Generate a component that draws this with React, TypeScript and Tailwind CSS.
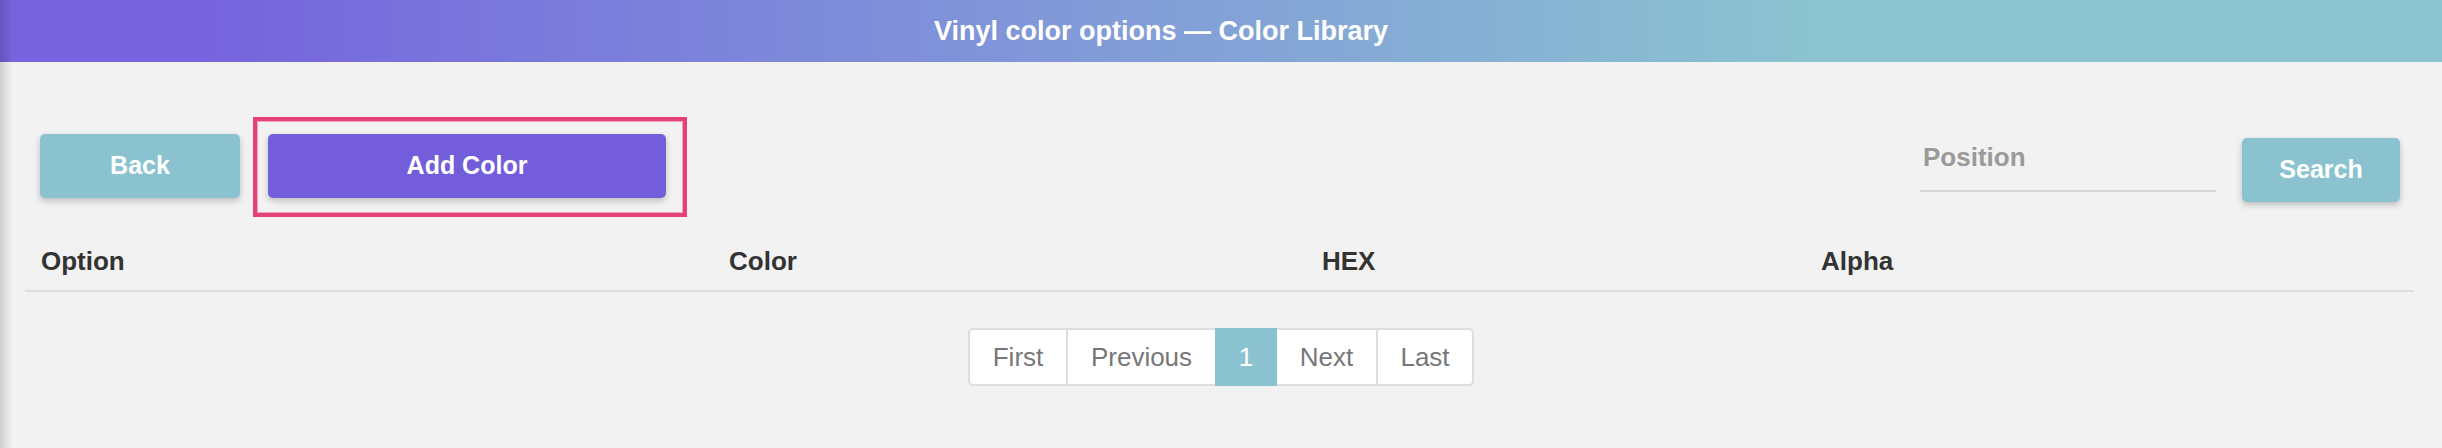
import React, { useState } from 'react';

const columns = [
  { label: 'Option', w: 'w-[688px]' },
  { label: 'Color', w: 'w-[593px]' },
  { label: 'HEX', w: 'w-[499px]' },
  { label: 'Alpha', w: 'flex-1' },
];

const App: React.FC = () => {
  const [position, setPosition] = useState('');

  return (
    <div
      className="relative min-h-[448px] bg-[#f2f2f2] text-[#333]"
      style={{ fontFamily: '"Liberation Sans", Arial, Helvetica, sans-serif' }}
    >
      {/* sidebar shadow on the left edge */}
      <div className="pointer-events-none absolute inset-y-0 left-0 z-20 w-[12px] bg-linear-to-r from-black/15 to-transparent" />

      <header className="flex h-[62px] items-center justify-center bg-linear-to-r from-[#7663dd] from-8% to-[#8bc4d0] to-75% pr-[120px]">
        <h1 className="text-[27px] font-bold leading-[30px] text-white">Vinyl color options — Color Library</h1>
      </header>

      <div className="px-[25px]">
        <div className="mt-[55px] flex items-start pl-[15px] pr-[17px]">
          <button
            type="button"
            className="mt-[17px] h-[64px] w-[200px] rounded-[5px] bg-[#8ac3cf] text-[25px] font-bold text-white shadow-[0_3px_6px_rgba(0,0,0,0.22)]"
          >Back</button>

          <div className="ml-[13px] border-4 border-[#e6407b] pt-[13px] pr-[17px] pb-[15px] pl-[11px] shadow-[inset_0_0_0_1px_#f0a3bf]">
            <button
              type="button"
              className="h-[64px] w-[398px] rounded-[5px] bg-[#735ddb] text-[25px] font-bold text-white shadow-[0_3px_6px_rgba(0,0,0,0.22)]"
            >Add Color</button>
          </div>

          <div className="flex-1" />

          <input
            className="mt-[25px] h-[50px] w-[296px] border-b-2 border-[#d6d6d6] bg-transparent pb-[18px] pl-[3px] text-[26px] font-bold leading-[30px] text-[#555] outline-none placeholder:text-[#9a9a9a]"
            placeholder="Position"
            value={position}
            onChange={e => setPosition(e.target.value)}
          />

          <button
            type="button"
            className="mt-[21px] ml-[26px] h-[64px] w-[158px] rounded-[5px] bg-[#8ac3cf] text-[25px] font-bold text-white shadow-[0_3px_6px_rgba(0,0,0,0.22)]"
          >Search</button>
        </div>

        <div className="mr-[3px] flex border-b-2 border-[#dedede] pt-[29px] pb-[14px]">
          {columns.map(c => (
            <div key={c.label} className={`${c.w} pl-[16px] text-[26px] font-bold leading-[30px] text-[#333]`}>{c.label}</div>
          ))}
        </div>

        <div className="mt-[36px] flex justify-center">
          <div className="flex h-[58px] text-[26px] leading-[30px] text-[#777]">
            <button type="button" className="w-[100px] rounded-l-[5px] border-2 border-[#dedede] bg-white">First</button>
            <button type="button" className="w-[147px] border-y-2 border-[#dedede] bg-white">Previous</button>
            <button type="button" className="w-[62px] bg-[#8ac3cf] text-white">1</button>
            <button type="button" className="w-[101px] border-y-2 border-r-2 border-[#dedede] bg-white">Next</button>
            <button type="button" className="w-[96px] rounded-r-[5px] border-y-2 border-r-2 border-[#dedede] bg-white">Last</button>
          </div>
        </div>
      </div>
    </div>
  );
};

export default App;
